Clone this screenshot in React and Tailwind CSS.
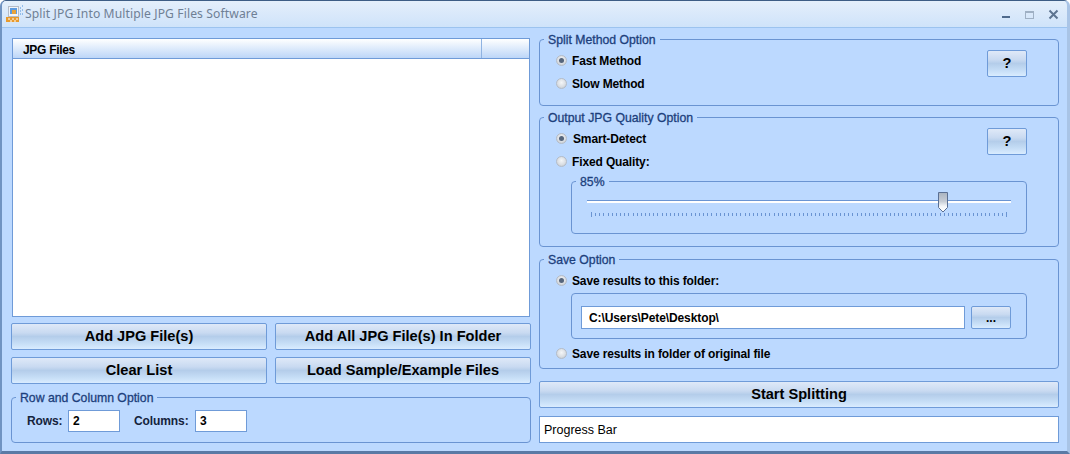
const sans = 'font-["Liberation_Sans",Arial,sans-serif]';
const buttonFace =
  'bg-[linear-gradient(to_bottom,#dfe9f8_0%,#c9daf1_35%,#b4cdea_50%,#c4dcf5_75%,#d9ecff_100%)] border border-[#6f9bd8] rounded-[2px] font-bold text-black';

// Group box with the caption sitting on the top border
const Group = ({ title, className = '', children }) => (
  <fieldset className={`border border-[#6a94d2] rounded-[4px] min-w-0 ${className}`}>
    <legend className="ml-[4px] px-[4px] h-[14px] leading-[16px] text-[12.25px] text-[#1c3f7c] [-webkit-text-stroke:0.3px_#1c3f7c] whitespace-nowrap">
      {title}
    </legend>
    {children}
  </fieldset>
);

const Radio = ({ checked, label, gap = 'ml-[5px]' }) => (
  <div className="flex items-center h-[23px]">
    <span className="w-[11px] h-[11px] rounded-full border border-[#b5bcc6] bg-[radial-gradient(circle_at_50%_40%,#f4f6f8_0%,#d9dde2_60%,#b9c0c9_100%)] flex items-center justify-center">
      {checked && <span className="w-[5px] h-[5px] rounded-full bg-[#55657c]" />}
    </span>
    <span className={`${gap} text-[12px] tracking-[-0.13px] font-bold text-black`}>{label}</span>
  </div>
);

const HelpButton = () => (
  <button className={`${buttonFace} mt-[1px] w-[40px] h-[27px] text-[14.6px] leading-none`}>?</button>
);

const BigButton = ({ label, className = '' }) => (
  <button className={`${buttonFace} h-[27px] pb-[1px] text-[14.6px] leading-none ${className}`}>{label}</button>
);

const Field = ({ value, className = '' }) => (
  <input
    readOnly
    value={value}
    className={`bg-white border border-[#6f9bd8] text-[12px] tracking-[-0.1px] font-bold text-black outline-none ${className}`}
  />
);

const AppIcon = () => (
  <svg width="18" height="18" viewBox="0 0 18 18" aria-hidden="true">
    <rect x="2.5" y="1.5" width="10" height="10" fill="#f1f4f8" stroke="#b4bcc8" strokeWidth="1" />
    <rect x="4" y="3" width="7" height="6" fill="#5d9be0" />
    <rect x="6" y="5" width="4" height="4" fill="#e8a33a" />
    <rect x="0" y="12" width="13" height="5" fill="#e89a2c" />
    <path d="M2 14h2M6 14h2M10 14h2M4 16h2M8 16h2" stroke="#fff" strokeWidth="1" />
    <path d="M14 3h1M16 1h1M14 6h1M16 5h1M14 9h1M16 9h1" stroke="#4a90d9" strokeWidth="1" />
  </svg>
);

const WindowControls = () => (
  <div className="flex items-center mr-[8px]">
    <svg width="11" height="11" viewBox="0 0 11 11" className="mr-[12px]" aria-hidden="true">
      <rect x="1" y="7" width="8" height="2" fill="#4f6a8c" />
    </svg>
    <svg width="11" height="11" viewBox="0 0 11 11" className="mr-[13px]" aria-hidden="true">
      <rect x="1.5" y="2.5" width="8" height="7" fill="none" stroke="#9fb0c4" />
      <rect x="1" y="2" width="9" height="2" fill="#9fb0c4" />
    </svg>
    <svg width="11" height="11" viewBox="0 0 11 11" aria-hidden="true">
      <path d="M1.5 1.5l8 8M9.5 1.5l-8 8" stroke="#5d7490" strokeWidth="2" />
    </svg>
  </div>
);

const SliderTicks = () => (
  <svg width="417" height="5" className="block ml-[4px] mt-[9px]" aria-hidden="true">
    {Array.from({ length: 101 }, (_, i) => (
      <rect key={i} x={Math.round(i * 4.15)} y={i === 0 || i === 100 ? 0 : 1} width="1" height={i === 0 || i === 100 ? 5 : 3} fill="#6a94d2" />
    ))}
  </svg>
);

const SliderThumb = () => (
  <svg width="12" height="22" viewBox="0 0 12 22" className="absolute left-[350px] top-[-9px]" aria-hidden="true">
    <defs>
      <linearGradient id="thumb" x1="0" y1="0" x2="0" y2="1">
        <stop offset="0" stopColor="#a9b3c0" />
        <stop offset="0.45" stopColor="#c6ccd5" />
        <stop offset="0.7" stopColor="#f3f5f8" />
        <stop offset="1" stopColor="#ffffff" />
      </linearGradient>
    </defs>
    <path d="M1.5 1.5h9v15l-4.5 4.5-4.5-4.5z" fill="url(#thumb)" stroke="#5a6f93" strokeWidth="1" />
  </svg>
);

export default function App() {
  return (
    <div className={`${sans} w-[1070px] h-[454px] flex flex-col overflow-hidden bg-[#bcd9ff] border-t border-t-[#3d5d85] border-l-[2px] border-l-[#6f93c2] border-r-[3px] border-r-[#a9c4e6] border-b-[3px] border-b-[#5a7aa5] rounded-t-[6px]`}>
      {/* Title bar */}
      <div className="h-[27px] shrink-0 flex items-center justify-between bg-[linear-gradient(to_bottom,#e4effb,#cfe3fa)] border-b border-b-[#9cc3ef]">
        <div className="flex items-center pl-[4px]">
          <AppIcon />
          <span className='ml-[1px] text-[12.15px] text-[#6f8095] font-["Noto_Sans",sans-serif] tracking-[0.1px]'>
            Split JPG Into Multiple JPG Files Software
          </span>
        </div>
        <WindowControls />
      </div>

      {/* Body */}
      <div className="flex gap-[8px] pl-[9px] pt-[4px]">
        {/* Left column */}
        <div className="w-[520px] flex flex-col">
          <div className="mt-[6px] mx-[1px] h-[279px] bg-white border border-[#6f9bd8]">
            <div className="h-[20px] flex bg-[linear-gradient(to_bottom,#ffffff,#bcd6f8)] border-b border-b-[#6f9bd8]">
              <div className="w-[469px] border-r border-r-[#8fb3e2] pl-[10px] text-[12px] tracking-[-0.3px] leading-[22px] font-bold text-black">
                JPG Files
              </div>
            </div>
          </div>
          <div className="mt-[6px] grid grid-cols-[256px_256px] gap-x-[8px] gap-y-[7px]">
            <BigButton label="Add JPG File(s)" />
            <BigButton label="Add All JPG File(s) In Folder" />
            <BigButton label="Clear List" />
            <BigButton label="Load Sample/Example Files" />
          </div>
          <Group title="Row and Column Option" className="mt-[6px] h-[53px]">
            <div className="flex items-center pt-[6px] pl-[15px] text-[12px] tracking-[-0.1px] font-bold text-[#14233c]">
              <span className="w-[41px]">Rows:</span>
              <Field value="2" className="w-[52px] h-[22px] px-[4px]" />
              <span className="ml-[14px] w-[61px]">Columns:</span>
              <Field value="3" className="w-[52px] h-[22px] px-[4px]" />
            </div>
          </Group>
        </div>

        {/* Right column */}
        <div className="w-[520px] flex flex-col">
          <Group title="Split Method Option" className="h-[74px]">
            <div className="flex justify-between items-start pt-[3px] pl-[16px] pr-[31px]">
              <div>
                <Radio checked label="Fast Method" />
                <Radio label="Slow Method" />
              </div>
              <HelpButton />
            </div>
          </Group>

          <Group title="Output JPG Quality Option" className="mt-[4px] h-[137px]">
            <div className="flex justify-between items-start pt-[3px] pl-[16px] pr-[31px]">
              <div>
                <Radio checked label="Smart-Detect" gap="ml-[6px]" />
                <Radio label="Fixed Quality:" />
              </div>
              <HelpButton />
            </div>
            <Group title="85%" className="ml-[31px] mt-[1px] w-[456px] h-[60px]">
              <div className="relative ml-[15px] mt-[12px] w-[424px]">
                <div className="h-[3px] border-t border-t-[#6a94d2] bg-white" />
                <SliderThumb />
                <SliderTicks />
              </div>
            </Group>
          </Group>

          <Group title="Save Option" className="mt-[5px] h-[117px]">
            <div className="pt-[3px] pl-[16px]">
              <Radio checked label="Save results to this folder:" />
            </div>
            <div className="ml-[31px] mt-[1px] w-[456px] h-[46px] border border-[#6a94d2] rounded-[4px] flex gap-[6px] pl-[9px] pt-[12px]">
              <Field value="C:\Users\Pete\Desktop\" className="w-[384px] h-[23px] px-[7px]" />
              <button className={`${buttonFace} w-[40px] h-[23px] text-[12px] leading-none`}>...</button>
            </div>
            <div className="mt-[3px] pl-[16px]">
              <Radio label="Save results in folder of original file" />
            </div>
          </Group>

          <BigButton label="Start Splitting" className="mt-[12px]" />
          <div className="mt-[8px] h-[27px] bg-white border border-[#6f9bd8] pl-[4px] text-[12.5px] leading-[27px] text-black">
            Progress Bar
          </div>
        </div>
      </div>
    </div>
  );
}
